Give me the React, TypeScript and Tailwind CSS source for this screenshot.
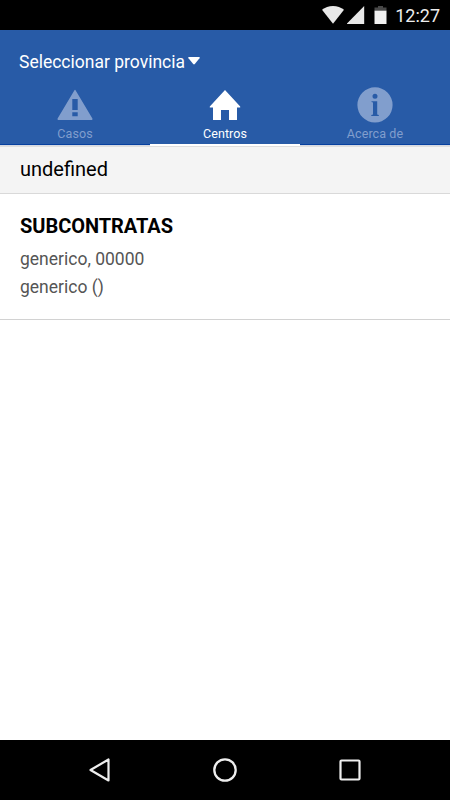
import React from 'react';

function StatusBar() {
  return (
    <div className="flex h-[30px] items-center justify-end bg-black pr-[10px]">
      <svg width="22" height="18" viewBox="0 0 22 18" className="mr-[3px]" fill="#e8e8e8">
        <path d="M11 17.8 0 3.8C3 1.3 6.800 0 11 0s8 1.300 11 3.800Z" />
      </svg>
      <svg width="18" height="18" viewBox="0 0 18 18" className="mr-[9px]" fill="#e8e8e8">
        <path d="M17.200 0V18H-.5Z" />
      </svg>
      <svg width="13" height="18" viewBox="0 0 13 18" className="mr-[8px]">
        <path d="M4 0H9V1.500H12.500V5H.5V1.500H4Z" fill="#484848" />
        <path d="M.5 4.700H12.500V18H.5Z" fill="#f0f0f0" />
      </svg>
      <span className="mt-px text-[18px] leading-[22px] text-[#ededed]">12:27</span>
    </div>
  );
}

function WarningIcon() {
  return (
    <svg width="36" height="36" viewBox="0 0 36 36" fill="currentColor">
      <path
        fillRule="evenodd"
        d="M17.300 3.400Q18 2.300 18.700 3.400L35.400 31.600Q36 33 34.700 33H1.300Q0 33 .6 31.600ZM15.300 12V23H20.700V12ZM15.300 25.300V29.200H20.700V25.300Z"
      />
    </svg>
  );
}

function HomeIcon() {
  return (
    <svg width="36" height="36" viewBox="0 0 36 36" fill="currentColor">
      <path d="M18 3 33.200 19.500V20.500H30V33H22V23H14V33H6V20.500H2.800V19.500Z" />
    </svg>
  );
}

function InfoIcon() {
  return (
    <svg width="36" height="36" viewBox="0 0 36 36" fill="currentColor">
      <path
        fillRule="evenodd"
        d="M18 .3a17.600 17.600 0 1 1 0 35.200a17.600 17.600 0 1 1 0-35.200ZM18 6.800a2.500 2.500 0 1 0 0 5a2.500 2.500 0 1 0 0-5ZM14.500 14.200V15.100L16 15.600V27.400L14.300 28V29H21.800V28L20.200 27.400V14.200Z"
      />
    </svg>
  );
}

type TabProps = { label: string; active?: boolean; children: React.ReactNode };

function Tab({ label, active, children }: TabProps) {
  return (
    <button
      className={
        active
          ? 'flex h-[59px] flex-1 flex-col items-center border-b-2 border-white bg-[#285ba7] text-white'
          : 'flex h-[58px] flex-1 flex-col items-center border-b border-[#06409f] bg-[#285ba7] text-[#819ecd]'
      }
    >
      {children}
      <span className="mt-[2px] text-[12.5px] leading-[17px] tracking-[0.1px]">{label}</span>
    </button>
  );
}

export default function App() {
  return (
    <div className="flex h-[800px] w-[450px] flex-col overflow-hidden bg-white font-['Roboto',sans-serif]">
      <StatusBar />
      <header className="flex h-[116px] flex-col bg-[#285ba7]">
        <button className="flex h-[57px] items-center pt-[7px] pl-[19px] text-[17.5px] text-white">
          Seleccionar provincia
          <svg width="12" height="8" viewBox="0 0 12 8" className="mb-[2px] ml-[3px]" fill="currentColor">
            <path d="M.8 0H11.200Q12.200.2 11.500 1.200L6.800 7Q6 7.800 5.200 7L.5 1.200Q-.2.2.8 0Z" />
          </svg>
        </button>
        <nav className="flex items-start bg-[#d5d9e2]">
          <Tab label="Casos"><WarningIcon /></Tab>
          <Tab label="Centros" active><HomeIcon /></Tab>
          <Tab label="Acerca de"><InfoIcon /></Tab>
        </nav>
      </header>
      <main className="flex-1">
        <h2 className="h-[48px] border-t border-b border-t-[#dedede] border-b-[#d9d9d9] bg-[#f4f4f4] pl-5 text-[20px] leading-[45px] text-black">
          undefined
        </h2>
        <section className="h-[126px] border-b border-[#d2d2d2] px-5 pt-[20px]">
          <h3 className="text-[20px] leading-[24px] font-bold tracking-[-0.04px] text-black">SUBCONTRATAS</h3>
          <p className="mt-[8px] text-[17.5px] leading-[27px] text-[#555555]">generico, 00000</p>
          <p className="text-[17.5px] leading-[28px] text-[#555555]">generico ()</p>
        </section>
      </main>
      <footer className="flex h-[60px] items-center justify-center gap-[101px] bg-black text-[#eeeeee]">
        <svg width="24" height="24" viewBox="0 0 24 24" fill="none" stroke="currentColor" strokeWidth="2.200" strokeLinejoin="round">
          <path d="M20.500 1.500V22.500L2.500 12Z" />
        </svg>
        <svg width="24" height="24" viewBox="0 0 24 24" fill="none" stroke="currentColor" strokeWidth="2.300">
          <circle cx="12" cy="12" r="10.700" />
        </svg>
        <svg width="24" height="24" viewBox="0 0 24 24" fill="none" stroke="currentColor" strokeWidth="2.200">
          <rect x="2.500" y="2.500" width="19" height="19" rx="1" />
        </svg>
      </footer>
    </div>
  );
}
